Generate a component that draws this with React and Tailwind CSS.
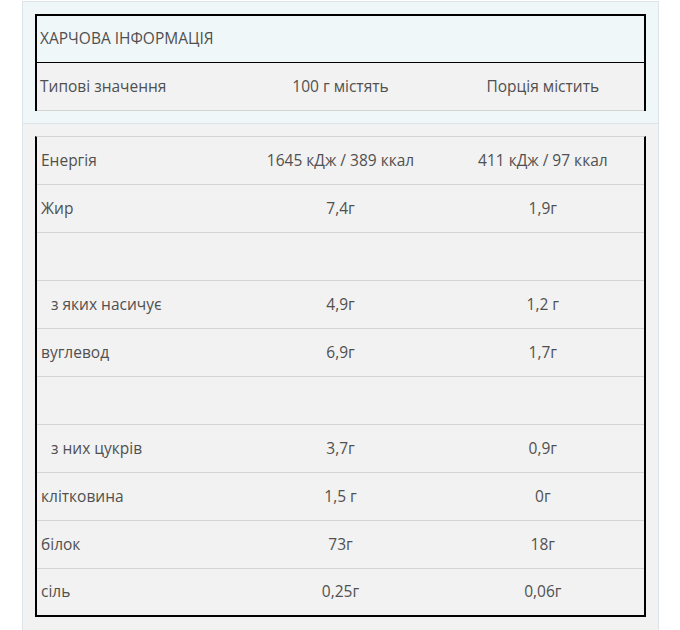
const rows = [
  { name: "Енергія", per100: "1645 кДж / 389 ккал", portion: "411 кДж / 97 ккал" },
  { name: "Жир", per100: "7,4г", portion: "1,9г" },
  { name: "", per100: "", portion: "" },
  { name: "з яких насичує", per100: "4,9г", portion: "1,2 г", indent: true },
  { name: "вуглевод", per100: "6,9г", portion: "1,7г" },
  { name: "", per100: "", portion: "" },
  { name: "з них цукрів", per100: "3,7г", portion: "0,9г", indent: true },
  { name: "клітковина", per100: "1,5 г", portion: "0г" },
  { name: "білок", per100: "73г", portion: "18г" },
  { name: "сіль", per100: "0,25г", portion: "0,06г" },
];

function Row({ row, last }) {
  return (
    <div
      className={`grid grid-cols-3 h-[48px] items-center ${
        last ? "border-b-2 border-black" : "border-b border-[#d4d4d4]"
      }`}
    >
      <div className={row.indent ? "pl-[14px]" : "pl-[4px]"}>{row.name}</div>
      <div className="text-center">{row.per100}</div>
      <div className="text-center">{row.portion}</div>
    </div>
  );
}

export default function App() {
  return (
    <div className="w-[680px] h-[630px] bg-white overflow-hidden font-['Open_Sans',sans-serif] text-[15.5px] text-[#505050]">
      <div className="ml-[22px] w-[637px] mt-[1px] border border-[#dde3e6] border-b-0">
        {/* Header */}
        <div className="bg-[#f0f7f9] px-[12px] pt-[12px] pb-[12px] border-b border-[#dde3e6]">
          <div className="border-2 border-black border-b-0">
            <div className="h-[47px] flex items-center pl-[3px] border-b border-black uppercase">
              Харчова інформація
            </div>
            <div className="grid grid-cols-3 h-[48px] items-center bg-[#f2f2f2] border-b border-[#d4d4d4]">
              <div className="pl-[3px]">Типові значення</div>
              <div className="text-center">100 г містять</div>
              <div className="text-center">Порція містить</div>
            </div>
          </div>
        </div>

        {/* Values */}
        <div className="bg-[#f2f2f2] px-[12px] pt-[12px] pb-[20px]">
          <div className="border-x-2 border-black border-t border-t-[#d4d4d4]">
            {rows.map((row, i) => (
              <Row key={i} row={row} last={i === rows.length - 1} />
            ))}
          </div>
        </div>
      </div>
    </div>
  );
}
